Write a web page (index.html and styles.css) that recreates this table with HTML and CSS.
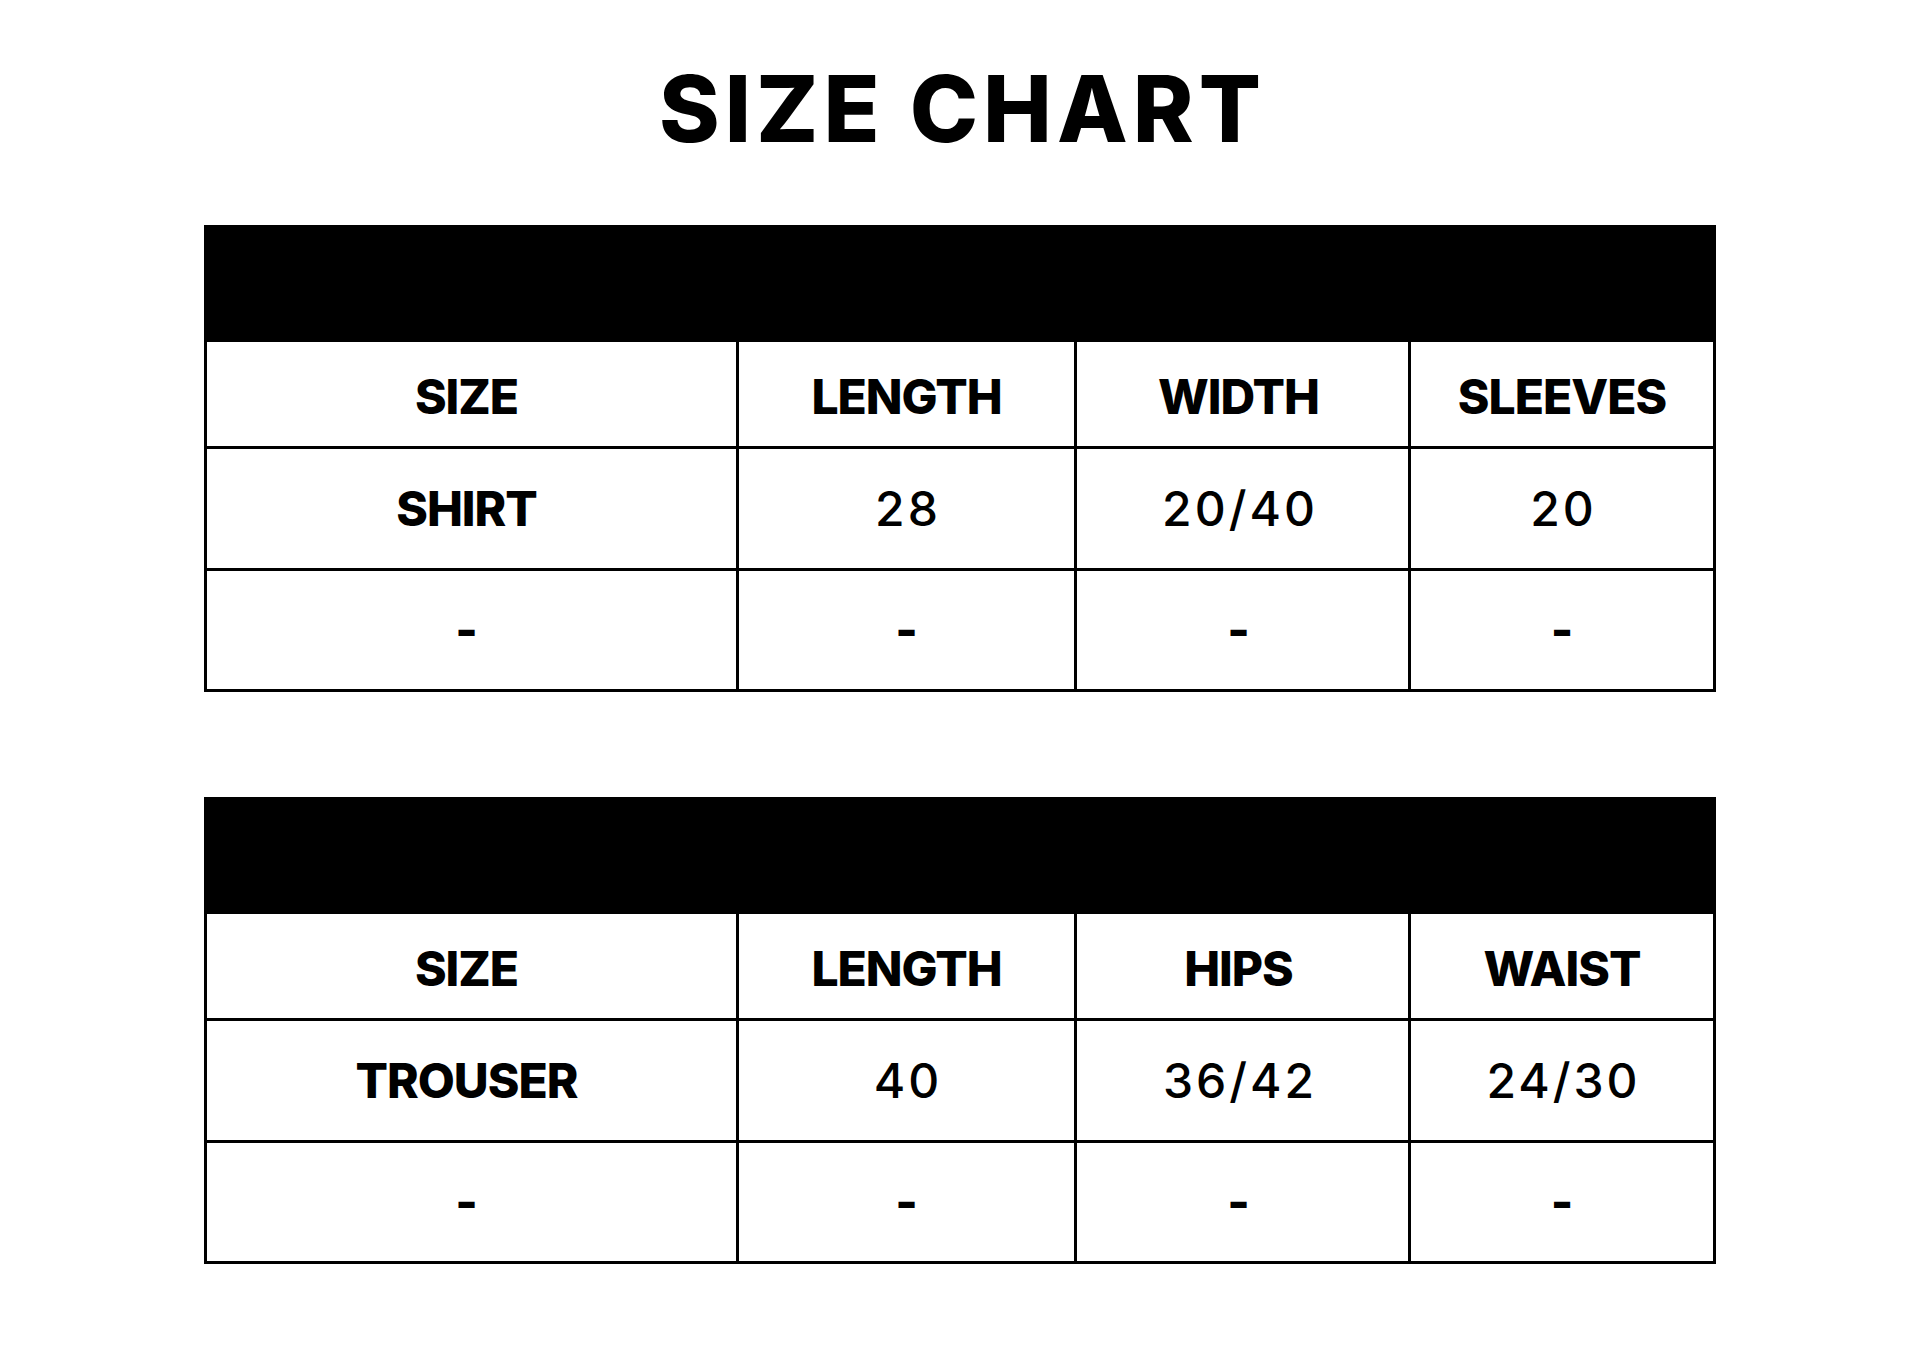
FILE: index.html
```html
<!DOCTYPE html>
<html lang="en">
<head>
<meta charset="utf-8">
<title>Size Chart</title>
<link rel="stylesheet" href="styles.css">
</head>
<body>
<main class="page">
  <h1 class="title">SIZE CHART</h1>

  <section class="chart">
    <div class="chart-bar"></div>
    <div class="row labels">
      <div class="cell head">SIZE</div>
      <div class="cell head">LENGTH</div>
      <div class="cell head">WIDTH</div>
      <div class="cell head">SLEEVES</div>
    </div>
    <div class="row tall">
      <div class="cell head">SHIRT</div>
      <div class="cell val">28</div>
      <div class="cell val">20/40</div>
      <div class="cell val">20</div>
    </div>
    <div class="row tall">
      <div class="cell dash">-</div>
      <div class="cell dash">-</div>
      <div class="cell dash">-</div>
      <div class="cell dash">-</div>
    </div>
  </section>

  <section class="chart">
    <div class="chart-bar"></div>
    <div class="row labels">
      <div class="cell head">SIZE</div>
      <div class="cell head">LENGTH</div>
      <div class="cell head">HIPS</div>
      <div class="cell head">WAIST</div>
    </div>
    <div class="row tall">
      <div class="cell head">TROUSER</div>
      <div class="cell val">40</div>
      <div class="cell val">36/42</div>
      <div class="cell val">24/30</div>
    </div>
    <div class="row tall">
      <div class="cell dash">-</div>
      <div class="cell dash">-</div>
      <div class="cell dash">-</div>
      <div class="cell dash">-</div>
    </div>
  </section>
</main>
</body>
</html>
```

FILE: styles.css
```css
* { box-sizing: border-box; }

html, body {
  margin: 0;
  padding: 0;
  background: #ffffff;
}

body {
  width: 1920px;
  height: 1350px;
  font-family: Inter, "Liberation Sans", sans-serif;
  color: #000;
}

.page {
  display: flex;
  flex-direction: column;
  align-items: center;
  padding-top: 63px;
}

.title {
  margin: 0;
  font-size: 92px;
  line-height: 1;
  font-weight: 800;
  letter-spacing: 5px;
  text-align: center;
  padding-left: 5px;
}

.chart {
  width: 1512px;
  border: 3px solid #000;
  margin-top: 70px;
}

.chart + .chart {
  margin-top: 105px;
}

.chart-bar {
  height: 114px;
  background: #000;
}

.row {
  display: grid;
  grid-template-columns: 529px 338px 334px 1fr;
  height: 104px;
}

.row.labels .cell {
  padding-top: 6px;
}

.row.tall {
  height: 122px;
  border-top: 3px solid #000;
}

.row.tall:last-child {
  height: 121px;
}

.cell {
  display: flex;
  align-items: center;
  justify-content: center;
  border-left: 3px solid #000;
  font-size: 48px;
  line-height: 1;
}

.cell:first-child {
  border-left: none;
  padding-right: 10px;
}

.cell:nth-child(3) {
  padding-right: 8px;
}

.head {
  font-weight: 800;
  letter-spacing: -1px;
}

.val {
  font-weight: 500;
  letter-spacing: 3px;
  text-indent: 3px;
}

.dash {
  font-weight: 800;
}
```
